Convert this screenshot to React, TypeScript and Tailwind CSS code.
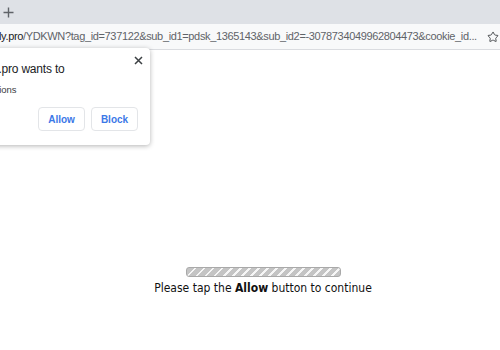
import { Star } from 'lucide-react';

const url =
  '/YDKWN?tag_id=737122&sub_id1=pdsk_1365143&sub_id2=-3078734049962804473&cookie_id...';

export default function App() {
  return (
    <div className="relative flex h-[350px] w-[500px] flex-col overflow-hidden bg-white font-['Liberation_Sans',Arial,sans-serif]">
      {/* tab strip */}
      <div className="flex h-[24px] items-center bg-[#dee1e6] pl-[3px]">
        <svg width="11" height="11" viewBox="0 0 11 11" className="text-[#5f6368]">
          <path d="M5.5 0.5v10M0.5 5.5h10" stroke="currentColor" strokeWidth="1.4" />
        </svg>
      </div>

      {/* toolbar */}
      <div className="flex h-[26px] items-center justify-between border-b border-[#dadce0] bg-[#f8f9fa] pr-[1px]">
        <div className="ml-[-1px] whitespace-nowrap text-[11px] tracking-[-0.35px] text-[#5f6368]">
          <span className="text-[#202124]">ly.pro</span>
          {url}
        </div>
        <Star size={12} strokeWidth={1.8} className="text-[#3c4043]" />
      </div>

      {/* page */}
      <main className="flex flex-1 flex-col items-center pl-[26px] pt-[217px]">
        <div className="h-[10px] w-[155px] rounded-[3px] border border-[#a9a9a9] bg-[repeating-linear-gradient(-45deg,#c4c4c4_0,#c4c4c4_4.5px,#f6f6f6_4.5px,#f6f6f6_6.4px)]" />
        <p className="mt-[2px] text-[12px] text-[#111] font-['DejaVu_Sans_Condensed','DejaVu_Sans',sans-serif]">
          Please tap the <b>Allow</b> button to continue
        </p>
      </main>

      {/* notification permission popup */}
      <div className="absolute left-[-200px] top-[48px] flex h-[97px] w-[350px] flex-col rounded-[4px] bg-white pl-[141px] pr-[12px] pt-[8px] shadow-[0_1px_5px_rgba(0,0,0,0.3)]">
        <div className="flex items-start justify-between">
          <p className="ml-[19px] mt-[4px] whitespace-nowrap text-[12px] tracking-[-0.2px] text-[#202124]">
            mydaily.pro wants to
          </p>
          <svg width="9" height="9" viewBox="0 0 9 9" className="-mr-[5px] text-[#3c4043]">
            <path d="M1 1l7 7M8 1l-7 7" stroke="currentColor" strokeWidth="1.5" />
          </svg>
        </div>
        <p className="-ml-[1px] mt-[5px] whitespace-nowrap text-[9.5px] text-[#3c4043]">Show notifications</p>
        <div className="mt-[10px] flex justify-end gap-[6px]">
          <button className="h-[24px] w-[47px] rounded-[4px] border border-[#e3e5e8] text-[10px] font-bold text-[#3b78e7]">
            Allow
          </button>
          <button className="h-[24px] w-[47px] rounded-[4px] border border-[#e3e5e8] text-[10px] font-bold text-[#3b78e7]">
            Block
          </button>
        </div>
      </div>
    </div>
  );
}
